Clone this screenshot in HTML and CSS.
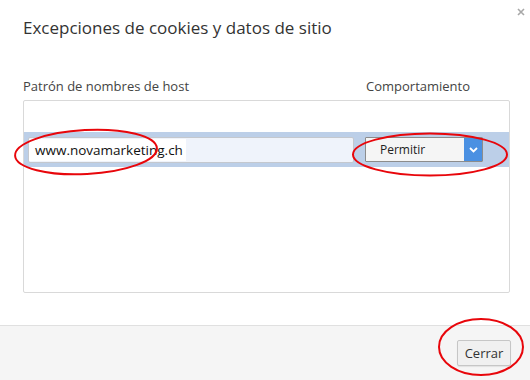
FILE: index.html
```html
<!DOCTYPE html>
<html lang="es">
<head>
    <meta charset="UTF-8">
    <meta name="viewport" content="width=device-width, initial-scale=1.0">
    <title>Excepciones de cookies y datos de sitio</title>
    <link rel="stylesheet" href="styles.css">
</head>
<body>
    <div class="dialog">
        <button class="close" aria-label="Cerrar">
            <svg width="8" height="8" viewBox="0 0 8 8"><path d="M1 1 L7 7 M7 1 L1 7" stroke="#a8a8a8" stroke-width="1.6"/></svg>
        </button>
        <h1 class="title">Excepciones de cookies y datos de sitio</h1>

        <div class="content">
            <div class="headers">
                <span class="col-host">Patrón de nombres de host</span>
                <span class="col-behavior">Comportamiento</span>
            </div>
            <div class="list">
                <div class="row selected">
                    <div class="host-input"><span class="host-text">www.novamarketing.ch</span></div>
                    <div class="select">
                        <span class="select-value">Permitir</span>
                        <span class="select-arrow">
                            <svg width="9" height="6" viewBox="0 0 9 6"><path d="M1 1 L4.5 4.5 L8 1" fill="none" stroke="#fff" stroke-width="1.8"/></svg>
                        </span>
                    </div>
                </div>
            </div>
        </div>

        <div class="footer">
            <button class="btn">Cerrar</button>
        </div>

        <!-- red marks drawn over the screenshot -->
        <svg class="marks" width="530" height="380" viewBox="0 0 530 380">
            <ellipse cx="86" cy="152" rx="71" ry="22" transform="rotate(-3 86 152)" fill="none" stroke="#e8060b" stroke-width="2"/>
            <ellipse cx="430" cy="154.5" rx="77" ry="21" fill="none" stroke="#e8060b" stroke-width="2"/>
            <ellipse cx="481" cy="347" rx="42" ry="28" fill="none" stroke="#e8060b" stroke-width="2"/>
        </svg>
    </div>
</body>
</html>
```

FILE: styles.css
```css
body {
    margin: 0;
    background: #ffffff;
    font-family: "Open Sans", "Noto Sans", Arial, sans-serif;
    color: #333;
}

.dialog {
    position: relative;
    width: 530px;
    height: 380px;
    display: flex;
    flex-direction: column;
    overflow: hidden;
}

.close {
    position: absolute;
    top: 8px;
    right: 5px;
    padding: 0;
    border: none;
    background: none;
    line-height: 0;
}

.title {
    margin: 0;
    padding: 17px 23px 0;
    font-size: 17px;
    font-weight: normal;
    line-height: 22px;
    color: #333;
}

.content {
    padding: 0 20px 0 23px;
    flex: 1;
}

.headers {
    display: flex;
    margin-top: 39px;
    font-size: 13px;
    line-height: 17px;
    color: #444;
}

.col-host {
    width: 343px;
}

.list {
    box-sizing: border-box;
    margin-top: 5px;
    height: 193px;
    border: 1px solid #d9d9d9;
    border-radius: 2px;
    padding-top: 31px;
}

.row {
    height: 35px;
    display: flex;
    align-items: center;
    padding-left: 4px;
}

.row.selected {
    background: #bccfe8;
}

.host-input {
    width: 324px;
    height: 24px;
    border: 1px solid #c4c8ce;
    border-radius: 2px;
    background: #eff3fb;
    display: flex;
    align-items: center;
}

.host-text {
    background: #fff;
    padding: 0 3px 0 6px;
    font-size: 13.5px;
    line-height: 22px;
    color: #111;
}

.select {
    margin-left: 11px;
    width: 118px;
    height: 25px;
    border: 1px solid #8c8c8c;
    border-radius: 1px;
    background: #f5f5f5;
    display: flex;
    box-sizing: border-box;
}

.select-value {
    flex: 1;
    padding-left: 14px;
    font-size: 12px;
    line-height: 23px;
    color: #222;
}

.select-arrow {
    width: 18px;
    background: #4a90e2;
    display: flex;
    align-items: center;
    justify-content: center;
}

.footer {
    height: 54px;
    border-top: 1px solid #e0e0e0;
    background: #f5f5f5;
    display: flex;
    justify-content: flex-end;
    align-items: flex-start;
    padding-right: 19px;
}

.btn {
    margin-top: 14px;
    width: 54px;
    height: 26px;
    border: 1px solid #c6c6c6;
    border-radius: 2px;
    background: #f0f0f0;
    font-family: inherit;
    font-size: 13px;
    color: #333;
    padding: 0;
    box-shadow: 0 1px 1px rgba(0, 0, 0, 0.08);
}

.marks {
    position: absolute;
    top: 0;
    left: 0;
    pointer-events: none;
}
```
